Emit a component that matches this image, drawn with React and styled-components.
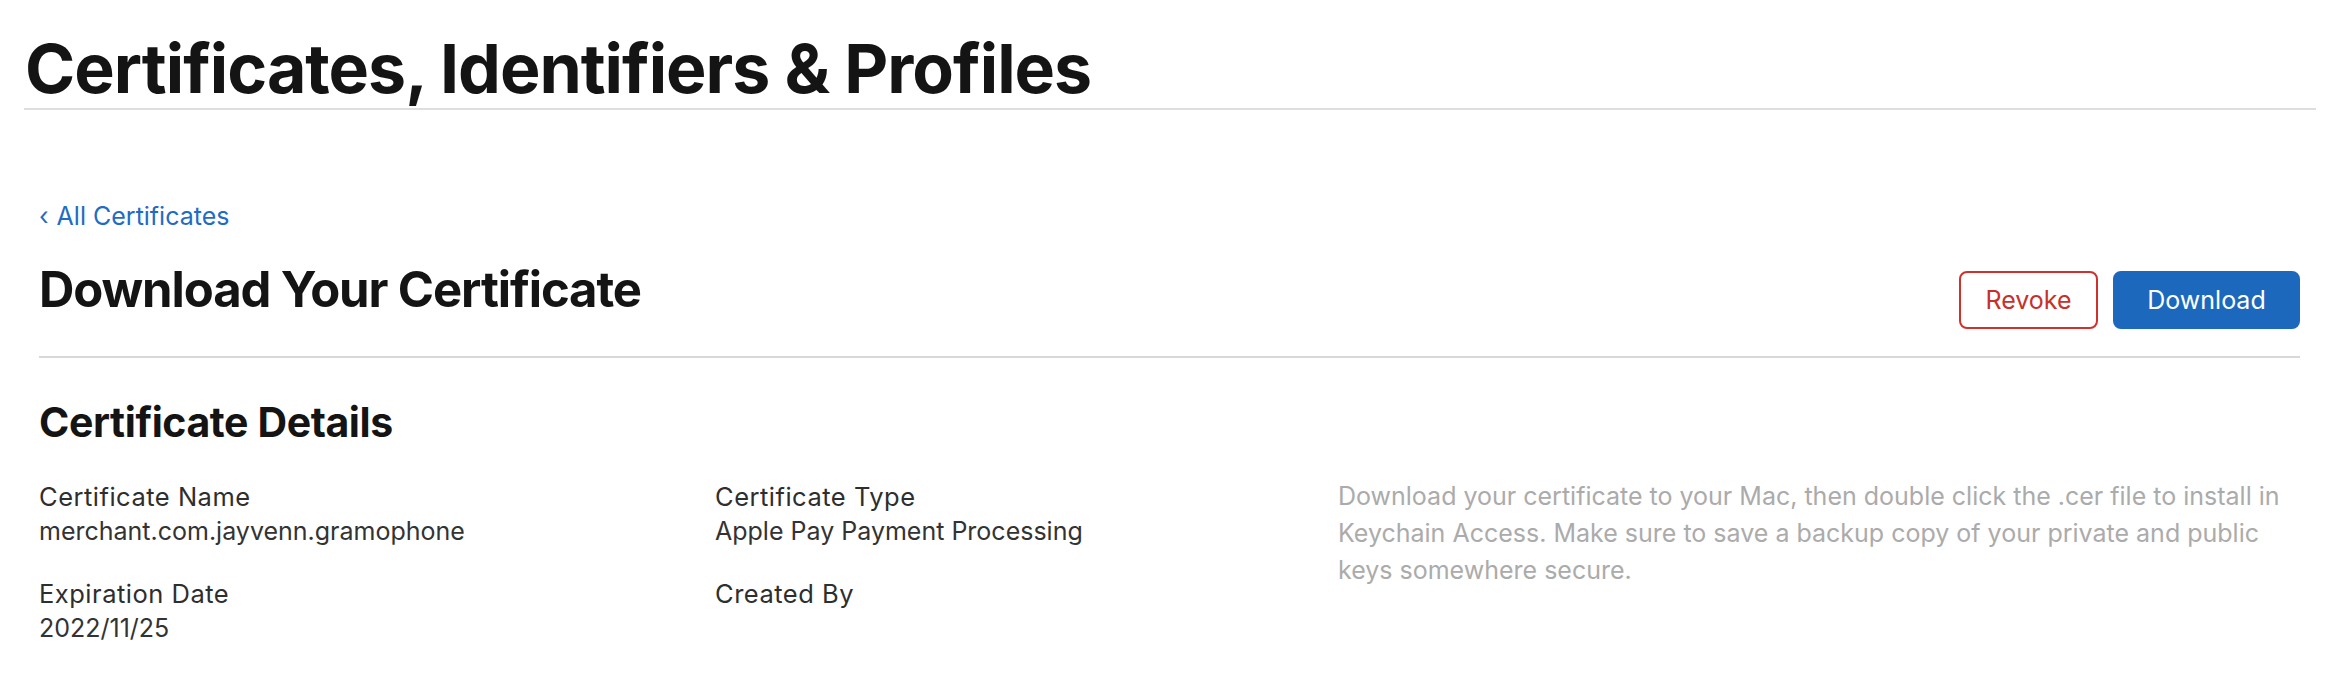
import React from "react";
import styled, { createGlobalStyle } from "styled-components";

const Global = createGlobalStyle`
  html, body { margin: 0; padding: 0; background: #fff; }
  body { font-family: Inter, "Noto Sans", "Liberation Sans", sans-serif; color: #1d1d1f; }
  * { box-sizing: border-box; }
`;

const Page = styled.div`
  width: 2332px;
  min-height: 684px;
  background: #fff;
`;

const Header = styled.header`
  margin: 0 16px 0 24px;
  padding: 28px 0 0 1px;
  border-bottom: 2px solid #dedede;
`;

const PageTitle = styled.h1`
  margin: 0;
  font-size: 68px;
  line-height: 80px;
  font-weight: 700;
  letter-spacing: -1px;
  color: #141414;
`;

const Main = styled.main`
  margin: 0 32px 0 39px;
`;

const BackLink = styled.a`
  display: inline-flex;
  align-items: baseline;
  gap: 8px;
  margin-top: 90px;
  font-size: 25px;
  line-height: 32px;
  color: #1f6cc4;
  text-decoration: none;
  cursor: pointer;
`;

const Chevron = styled.span`
  font-size: 25px;
`;

const TitleRow = styled.div`
  display: flex;
  justify-content: space-between;
  align-items: flex-start;
  margin-top: 28px;
  padding-bottom: 27px;
  border-bottom: 2px solid #d8d8d8;
`;

const SectionTitle = styled.h2`
  margin: 0;
  font-size: 49px;
  line-height: 60px;
  font-weight: 700;
  letter-spacing: -1.1px;
  color: #141414;
`;

const Actions = styled.div`
  display: flex;
  gap: 15px;
  margin-top: 11px;
`;

const Button = styled.button`
  height: 58px;
  padding: 0;
  width: ${(p) => (p.$primary ? "187px" : "139px")};
  border-radius: 8px;
  font-family: inherit;
  font-size: 25px;
  font-weight: 400;
  cursor: pointer;
  border: 2px solid ${(p) => (p.$primary ? "#1c68bd" : "#d0312d")};
  background: ${(p) => (p.$primary ? "#1c68bd" : "#fff")};
  color: ${(p) => (p.$primary ? "#fff" : "#c8302b")};
`;

const SubTitle = styled.h3`
  margin: 40px 0 0;
  font-size: 41px;
  line-height: 48px;
  font-weight: 700;
  letter-spacing: -0.4px;
  color: #141414;
`;

const DetailsGrid = styled.div`
  display: grid;
  grid-template-columns: 676px 623px 1fr;
  margin-top: 33px;
`;

const Column = styled.div`
  display: flex;
  flex-direction: column;
  gap: 27px;
`;

const Field = styled.div`
  display: flex;
  flex-direction: column;
`;

const Label = styled.div`
  font-size: 25.5px;
  font-weight: 400;
  letter-spacing: 0.5px;
  line-height: 35px;
  color: #2e2e2e;
  min-height: 35px;
`;

const Value = styled.div`
  font-size: 25px;
  line-height: 35px;
  color: #333;
  min-height: 35px;
`;

const HelpText = styled.p`
  margin: -1px 0 0;
  font-size: 25px;
  line-height: 37px;
  color: #ababab;
`;

export default function App() {
  return (
    <Page>
      <Global />
      <Header>
        <PageTitle>Certificates, Identifiers &amp; Profiles</PageTitle>
      </Header>
      <Main>
        <BackLink>
          <Chevron>‹</Chevron>All Certificates
        </BackLink>
        <TitleRow>
          <SectionTitle>Download Your Certificate</SectionTitle>
          <Actions>
            <Button>Revoke</Button>
            <Button $primary>Download</Button>
          </Actions>
        </TitleRow>
        <SubTitle>Certificate Details</SubTitle>
        <DetailsGrid>
          <Column>
            <Field>
              <Label>Certificate Name</Label>
              <Value>merchant.com.jayvenn.gramophone</Value>
            </Field>
            <Field>
              <Label>Expiration Date</Label>
              <Value>2022/11/25</Value>
            </Field>
          </Column>
          <Column>
            <Field>
              <Label>Certificate Type</Label>
              <Value>Apple Pay Payment Processing</Value>
            </Field>
            <Field>
              <Label>Created By</Label>
              <Value />
            </Field>
          </Column>
          <HelpText>
            Download your certificate to your Mac, then double click the .cer file to install in
            Keychain Access. Make sure to save a backup copy of your private and public keys
            somewhere secure.
          </HelpText>
        </DetailsGrid>
      </Main>
    </Page>
  );
}
